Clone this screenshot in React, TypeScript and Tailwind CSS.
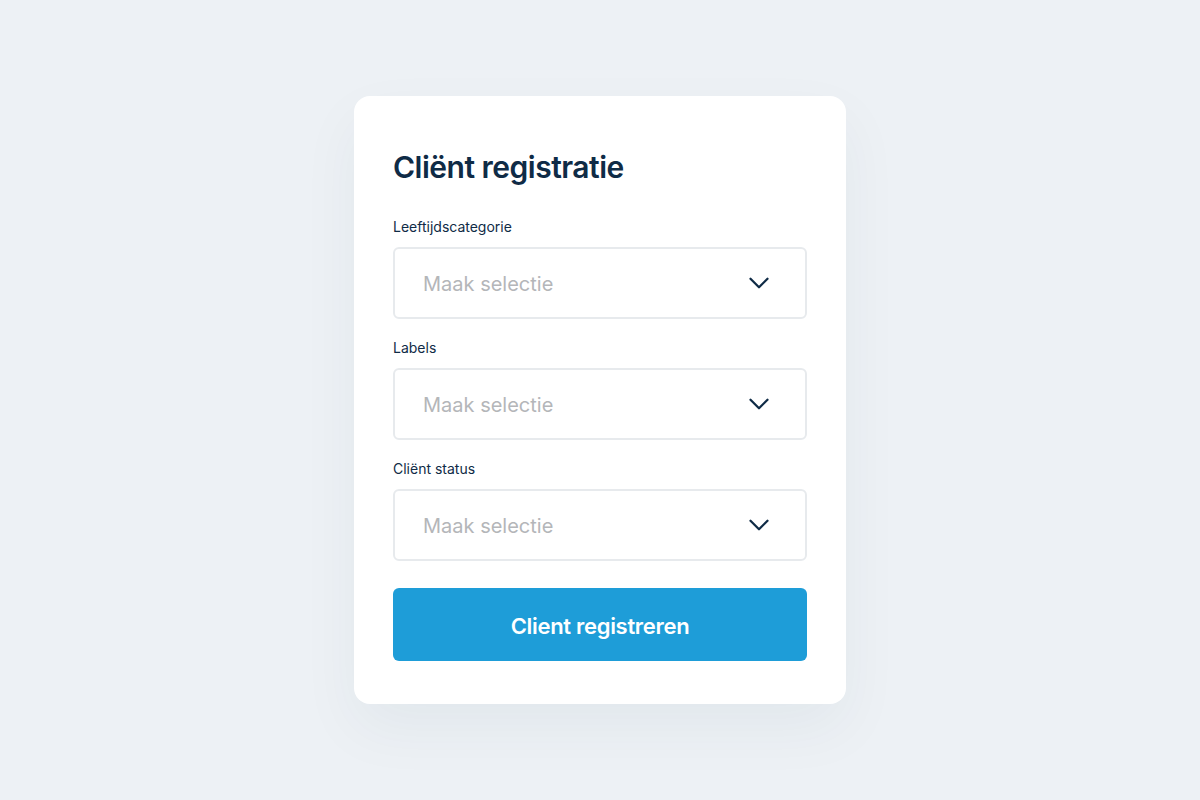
import { ChevronDown } from 'lucide-react'

const FIELDS = ['Leeftijdscategorie', 'Labels', 'Cliënt status']

function SelectField({ label }: { label: string }) {
  return (
    <div className="flex flex-col">
      <label className="h-5 text-[14px] leading-5 text-[#0f2b46] mb-[10px]">{label}</label>
      <button
        type="button"
        className="h-[72px] w-full flex items-center justify-between rounded-md border-2 border-[#e7eaed] bg-white pl-[28px] pr-[29px]"
      >
        <span className="text-[20px] text-[#b4b6b9] pt-[2px]">Maak selectie</span>
        <ChevronDown className="w-[34px] h-[34px] text-[#0f2b46]" strokeWidth={1.6} />
      </button>
    </div>
  )
}

export default function App() {
  return (
    <div
      className="min-h-[800px] w-full bg-[#edf1f5] flex items-start justify-center pt-[96px]"
      style={{ fontFamily: 'Inter, "Noto Sans", sans-serif' }}
    >
      <div className="w-[492px] bg-white rounded-2xl px-[39px] pt-[51px] pb-[43px] shadow-[0_24px_60px_rgba(20,50,80,0.05)]">
        <h1 className="text-[30px] leading-[40px] font-semibold tracking-[-0.5px] text-[#0f2b46] mb-[30px]">
          Cliënt registratie
        </h1>
        <div className="flex flex-col gap-[19px]">
          {FIELDS.map((f) => (
            <SelectField key={f} label={f} />
          ))}
        </div>
        <button
          type="button"
          className="mt-[27px] h-[73px] w-full rounded-md bg-[#1e9dd8] text-white text-[22px] font-semibold tracking-[-0.3px] pt-[3px]"
        >
          Client registreren
        </button>
      </div>
    </div>
  )
}
